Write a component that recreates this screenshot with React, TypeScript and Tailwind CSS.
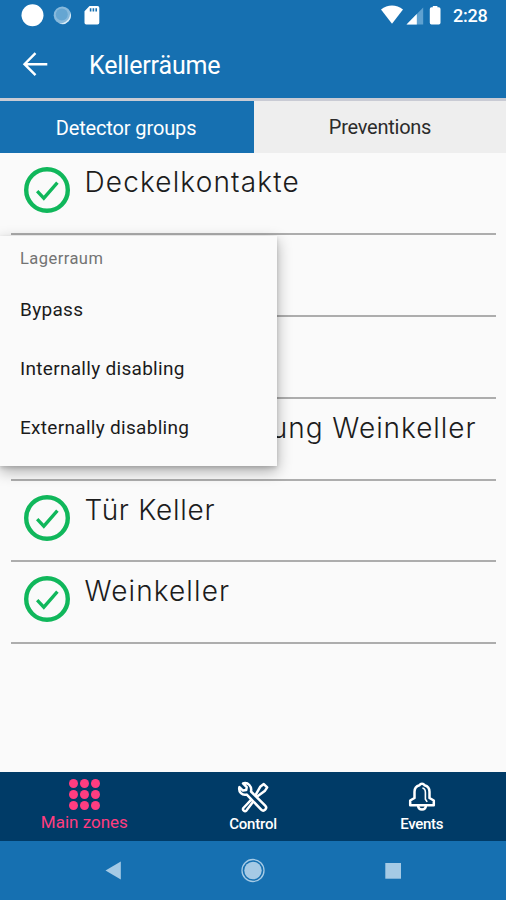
import { clsx } from "clsx";

// Rows without a name sit fully under the open context menu
const ZONES = [
  { id: 1, name: "Deckelkontakte", spacing: "tracking-[1.15px]" },
  { id: 2, name: "", spacing: "" },
  { id: 3, name: "", spacing: "" },
  { id: 4, name: "ung Weinkeller", spacing: "tracking-[0.95px]", alignEnd: true },
  { id: 5, name: "Tür Keller", spacing: "tracking-[0.75px]" },
  { id: 6, name: "Weinkeller", spacing: "tracking-[1.1px]" },
];

const MENU_ITEMS = ["Bypass", "Internally disabling", "Externally disabling"];

function StatusBar() {
  return (
    <div className="flex h-8 items-center text-white">
      <svg className="h-8 w-[110px]" viewBox="0 0 110 32" fill="currentColor">
        <circle cx="32.5" cy="15.2" r="11" />
        <circle cx="62.3" cy="15.2" r="8.6" fill="#87b9dc" />
        <path d="M70 12a8.4 8.4 0 0 1-11 11.3 10 10 0 0 0 11-11.3z" fill="#d8ebf7" />
        <circle cx="61.8" cy="14.6" r="6" fill="#65a6d2" />
        <path d="M89.5 6h8a1.8 1.8 0 0 1 1.8 1.8v14.9a1.8 1.8 0 0 1-1.8 1.8H86.3a1.8 1.8 0 0 1-1.8-1.8V11.2z" />
        <path d="M89.8 8.3h1.6v3.2h-1.6zM92.6 8.3h1.6v3.2h-1.6zM95.4 8.3H97v3.2h-1.6z" fill="#1670b1" />
      </svg>
      <svg className="ml-auto h-8 w-[66px]" viewBox="0 0 66 32" fill="currentColor">
        <path d="M1 9.5C7.5 4.2 16.5 4.2 23 9.5L12 23.7z" />
        <path d="M43.2 7.5v17H26.5z" fill="#5fa1d0" />
        <path d="M36.8 14.1v10.4H26.5z" />
        <path d="M52.8 7.3V6h4.6v1.3h1.4a1.7 1.7 0 0 1 1.7 1.7v13.8a1.7 1.7 0 0 1-1.7 1.7h-7.3a1.7 1.7 0 0 1-1.7-1.7V9a1.7 1.7 0 0 1 1.7-1.7z" />
      </svg>
      <span className="ml-[7px] w-[53px] text-[18px] font-medium leading-8 tracking-[-0.2px]">2:28</span>
    </div>
  );
}

function CheckIcon() {
  return (
    <svg className="mt-[14px] h-[46px] w-[46px] shrink-0" viewBox="0 0 46 46" fill="none" stroke="#10b75b">
      <circle cx="23" cy="23" r="20.8" strokeWidth="4.4" />
      <path d="M13.2 24.2l6.6 7L33.4 15.6" strokeWidth="3.3" />
    </svg>
  );
}

function ToolsIcon() {
  return (
    <svg className="h-8 w-8" viewBox="0 0 32 32" fill="none" stroke="currentColor" strokeWidth="2.5" strokeLinejoin="round">
      <path d="M6.4 27L18.5 14.2l4.7-8.4 3.6-2.7 3.4 3.3-2.5 3.7-7.5 5.4L9.4 29.6a2 2 0 0 1-3-2.6z" />
      <path
        d="M6 2.4l3.7 3.7-.5 3-3.2.5-3.6-3.4c-1.1 5 2.7 8.6 7.4 7.4L24.2 28.6a2.8 2.8 0 0 0 4-4L14 10.5C15.1 5.4 11.2 1 6 2.4z"
        fill="#003b67"
      />
    </svg>
  );
}

function BellIcon() {
  return (
    <svg className="h-8 w-8" viewBox="0 0 32 32" fill="none" stroke="currentColor" strokeWidth="2.5" strokeLinejoin="round">
      <path d="M4.2 24.3v-4.8l4.3-2.5v-6.2c0-4 2.5-6 5-6.6a2.8 2.8 0 0 1 5 0c2.8.7 5 2.8 5 6.6V17l4.3 2.5v4.8z" />
      <path d="M12.1 25c.4 4.8 7.4 4.8 7.8 0" />
      <path d="M16.4 7c2.4.4 3 2 3 4.5v6.8l1.8 2.6" strokeWidth="1.6" />
    </svg>
  );
}

function DotsIcon() {
  return (
    <div className="grid grid-cols-3 gap-[2px]">
      {Array.from({ length: 9 }, (_, i) => (
        <span key={i} className="h-[9px] w-[9px] rounded-full bg-[#ff3d80]" />
      ))}
    </div>
  );
}

function ContextMenu() {
  return (
    <div className="absolute left-0 top-[83px] h-[230px] w-[276.5px] bg-[#fafafa] pl-5 shadow-[0_5px_14px_rgba(0,0,0,0.32),0_2px_4px_rgba(0,0,0,0.14)]">
      <div className="h-[44px] text-[16.5px] leading-[45px] tracking-[0.45px] text-[#737373]">Lagerraum</div>
      {MENU_ITEMS.map((item) => (
        <div key={item} className="h-[59px] text-[19px] leading-[59px] tracking-[0.3px] text-[#1b1b1b]">
          {item}
        </div>
      ))}
    </div>
  );
}

export default function App() {
  return (
    <div className="flex h-[900px] w-[506px] flex-col overflow-hidden bg-[#fafafa] font-['Roboto',sans-serif]">
      <header className="h-[98px] shrink-0 bg-[#1670b1] text-white">
        <StatusBar />
        <div className="flex h-[66px] items-center">
          <svg className="ml-[22px] h-[26px] w-[26px]" viewBox="0 0 26 26" fill="none" stroke="currentColor" strokeWidth="2.4">
            <path d="M25.3 12.2H2.5M13.5 1.2l-11 11 11 11" />
          </svg>
          <h1 className="ml-[41px] pt-[2px] text-[25px] leading-[66px] tracking-[-0.15px]">Kellerräume</h1>
        </div>
      </header>

      <div className="flex h-[55px] shrink-0 border-t-[3px] border-[#c9cbd4] text-[20px]">
        <div className="w-[252px] bg-[#1670b1] text-center leading-[55px] tracking-[-0.13px] text-white">Detector groups</div>
        <div className="w-[2px] bg-[#1670b1]" />
        <div className="flex-1 bg-[#eeeeee] text-center leading-[52px] tracking-[-0.25px] text-[#2b2b2b]">Preventions</div>
      </div>

      <main className="relative min-h-0 flex-1">
        {ZONES.map((zone) => (
          <div key={zone.id} className="mx-[10.5px] flex h-[81.9px] border-b-2 border-[#adadad] pl-[13px]">
            <CheckIcon />
            <span
              className={clsx(
                "flex-1 whitespace-nowrap pl-[15px] font-['Inter',sans-serif] text-[28px] font-light leading-[58px] text-[#1c1c1c]",
                zone.spacing,
                zone.alignEnd && "flex justify-end pr-[19px]",
              )}
            >
              {zone.name}
            </span>
          </div>
        ))}
        <ContextMenu />
      </main>

      <nav className="grid h-[69px] shrink-0 grid-cols-3 bg-[#003b67] text-white">
        <div className="flex flex-col items-center pt-[7px] text-[#ff3d80]">
          <DotsIcon />
          <span className="mt-px text-[17px] leading-[22px]">Main zones</span>
        </div>
        <div className="flex flex-col items-center pt-[9px]">
          <ToolsIcon />
          <span className="text-[15px] font-medium leading-[22px] tracking-[-0.2px]">Control</span>
        </div>
        <div className="flex flex-col items-center pt-[9px]">
          <BellIcon />
          <span className="text-[15px] font-medium leading-[22px] tracking-[-0.3px]">Events</span>
        </div>
      </nav>

      <div className="h-[59px] shrink-0 bg-[#1670b1]">
        <svg className="h-full w-full" viewBox="0 0 506 59" fill="#a5cae5">
          <path d="M105.5 29.5l15.3-9v18z" />
          <circle cx="253" cy="29.5" r="11" fill="none" stroke="#a5cae5" strokeWidth="1.3" />
          <circle cx="253" cy="29.5" r="8.7" />
          <rect x="385.3" y="22" width="15.7" height="15.7" />
        </svg>
      </div>
    </div>
  );
}
